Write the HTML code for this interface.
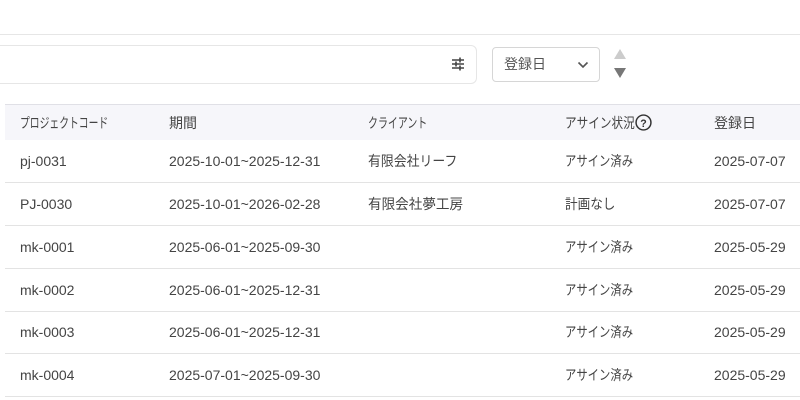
<!DOCTYPE html>
<html><head><meta charset="utf-8"><style>
*{box-sizing:border-box;margin:0;padding:0}
body{width:800px;height:400px;overflow:hidden;background:#fff;font-family:"Liberation Sans","Noto Sans CJK JP",sans-serif;font-size:14px;color:#444;position:relative}
.topline{position:absolute;left:0;right:0;top:34px;height:1px;background:#e6e6e6}
.search{position:absolute;left:-10px;top:45px;width:487px;height:39px;border:1px solid #e6e6e6;border-radius:6px}
.sel{position:absolute;left:492px;top:47px;width:108px;height:35px;border:1px solid #d6d6d6;border-radius:4px;padding-left:11px;line-height:33px;color:#555}
.hdr{position:absolute;left:5px;right:0;top:104px;height:36px;background:#f6f6fa;border-top:1px solid #e0e0e6;line-height:36px}
.row{position:absolute;left:5px;right:0;height:43px;border-bottom:1px solid #e3e3e3;line-height:42px}
.c{position:absolute;white-space:nowrap;top:0;transform-origin:0 50%}
.j{font-family:"Noto Sans CJK JP",sans-serif;font-weight:400;font-size:14px}
.a{transform:scaleX(0.81)}
</style></head><body>
<div class="topline"></div>
<div class="search">
<svg style="position:absolute;left:459px;top:10px" width="16" height="16" viewBox="0 0 16 16" stroke="#444" stroke-width="1.6" fill="none"><path d="M2 4h12M2 8h12M2 12h12M10 1.5v5M6 5.5v5M10 9.5v5"/></svg>
</div>
<div class="sel j">登録日
<svg style="position:absolute;left:84px;top:13px" width="12" height="8" viewBox="0 0 12 8" fill="none" stroke="#555" stroke-width="1.6"><path d="M1.5 1.5l4.5 4.5 4.5-4.5"/></svg></div>
<svg style="position:absolute;left:613px;top:48px" width="14" height="32" viewBox="0 0 14 32"><path d="M1 11L7 1l6 10z" fill="#ccc"/><path d="M1 20h12l-6 10z" fill="#777"/></svg>
<div class="hdr j">
<span class="c" style="left:15px;transform:scaleX(0.7)">プロジェクトコード</span>
<span class="c" style="left:164px">期間</span>
<span class="c" style="left:363px;transform:scaleX(0.71)">クライアント</span>
<span class="c" style="left:560px"><span style="display:inline-block;width:70px;transform:scaleX(0.83);transform-origin:0 50%">アサイン状況</span><svg style="vertical-align:-3px;margin-left:0" width="17" height="17" viewBox="0 0 16 16"><circle cx="8" cy="8" r="7" fill="none" stroke="#333" stroke-width="1.4"/><text x="8" y="12" font-size="10" font-weight="bold" text-anchor="middle" fill="#333" font-family="Liberation Sans">?</text></svg></span>
<span class="c" style="left:709px">登録日</span>
</div>
<div class="row" style="top:140px"><span class="c" style="left:15px">pj-0031</span><span class="c" style="left:164px">2025-10-01~2025-12-31</span><span class="c j" style="left:363px;transform:scaleX(0.92)">有限会社リーフ</span><span class="c j a" style="left:560px">アサイン済み</span><span class="c" style="left:709px">2025-07-07</span></div>
<div class="row" style="top:183px"><span class="c" style="left:15px">PJ-0030</span><span class="c" style="left:164px">2025-10-01~2026-02-28</span><span class="c j" style="left:363px;transform:scaleX(0.97)">有限会社夢工房</span><span class="c j" style="left:560px;transform:scaleX(0.9)">計画なし</span><span class="c" style="left:709px">2025-07-07</span></div>
<div class="row" style="top:226px"><span class="c" style="left:15px">mk-0001</span><span class="c" style="left:164px">2025-06-01~2025-09-30</span><span class="c j a" style="left:560px">アサイン済み</span><span class="c" style="left:709px">2025-05-29</span></div>
<div class="row" style="top:269px"><span class="c" style="left:15px">mk-0002</span><span class="c" style="left:164px">2025-06-01~2025-12-31</span><span class="c j a" style="left:560px">アサイン済み</span><span class="c" style="left:709px">2025-05-29</span></div>
<div class="row" style="top:311px"><span class="c" style="left:15px">mk-0003</span><span class="c" style="left:164px">2025-06-01~2025-12-31</span><span class="c j a" style="left:560px">アサイン済み</span><span class="c" style="left:709px">2025-05-29</span></div>
<div class="row" style="top:354px"><span class="c" style="left:15px">mk-0004</span><span class="c" style="left:164px">2025-07-01~2025-09-30</span><span class="c j a" style="left:560px">アサイン済み</span><span class="c" style="left:709px">2025-05-29</span></div>
</body></html>
